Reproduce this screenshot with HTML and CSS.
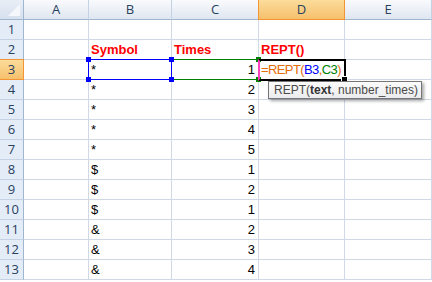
FILE: index.html
```html
<!DOCTYPE html>
<html>

<head>
    <title>REPT example</title>
    <link rel="stylesheet" href="styles.css">
</head>

<body>
    <div class="sheet">
        <div class="grid">
            <div class="hd corner"><span class="tri"></span></div>
            <div class="hd col">A</div>
            <div class="hd col">B</div>
            <div class="hd col">C</div>
            <div class="hd col active">D</div>
            <div class="hd col">E</div>

            <div class="hd row">1</div>
            <div class="c"></div><div class="c"></div><div class="c"></div><div class="c"></div><div class="c"></div>

            <div class="hd row">2</div>
            <div class="c"></div>
            <div class="c title">Symbol</div>
            <div class="c title">Times</div>
            <div class="c title">REPT<span class="paren">()</span></div>
            <div class="c"></div>

            <div class="hd row active">3</div>
            <div class="c"></div>
            <div class="c">*</div>
            <div class="c num">1</div>
            <div class="c formula"><span class="o">=REPT(</span><span class="b">B3</span><span class="o">,</span><span class="g">C3</span><span class="o">)</span></div>
            <div class="c"></div>

            <div class="hd row">4</div>
            <div class="c"></div><div class="c">*</div><div class="c num">2</div><div class="c"></div><div class="c"></div>
            <div class="hd row">5</div>
            <div class="c"></div><div class="c">*</div><div class="c num">3</div><div class="c"></div><div class="c"></div>
            <div class="hd row">6</div>
            <div class="c"></div><div class="c">*</div><div class="c num">4</div><div class="c"></div><div class="c"></div>
            <div class="hd row">7</div>
            <div class="c"></div><div class="c">*</div><div class="c num">5</div><div class="c"></div><div class="c"></div>
            <div class="hd row">8</div>
            <div class="c"></div><div class="c">$</div><div class="c num">1</div><div class="c"></div><div class="c"></div>
            <div class="hd row">9</div>
            <div class="c"></div><div class="c">$</div><div class="c num">2</div><div class="c"></div><div class="c"></div>
            <div class="hd row">10</div>
            <div class="c"></div><div class="c">$</div><div class="c num">1</div><div class="c"></div><div class="c"></div>
            <div class="hd row">11</div>
            <div class="c"></div><div class="c">&amp;</div><div class="c num">2</div><div class="c"></div><div class="c"></div>
            <div class="hd row">12</div>
            <div class="c"></div><div class="c">&amp;</div><div class="c num">3</div><div class="c"></div><div class="c"></div>
            <div class="hd row">13</div>
            <div class="c"></div><div class="c">&amp;</div><div class="c num">4</div><div class="c"></div><div class="c"></div>
        </div>

        <!-- range highlights and edit cell -->
        <div class="range blue">
            <span class="h tl"></span><span class="h bl"></span><span class="h tr"></span><span class="h br"></span>
        </div>
        <div class="range green">
            <span class="h tr"></span><span class="h br"></span>
        </div>
        <div class="edit"><span class="fill"></span></div>
        <div class="tip">REPT(<b>text</b>, number_times)</div>
    </div>
</body>

</html>
```

FILE: styles.css
```css
body {
    margin: 0;
    background: #fff;
    font-family: "Liberation Sans", Arial, sans-serif;
    font-size: 13px;
}

.sheet {
    position: relative;
    width: 432px;
    height: 282px;
    overflow: hidden;
}

.grid {
    display: grid;
    grid-template-columns: 24px 65px 83px 87px 86px 1fr;
    grid-template-rows: 20px repeat(13, 20px);
}

.c {
    border-right: 1px solid #d0d7e5;
    border-bottom: 1px solid #d0d7e5;
    padding: 0 3px 0 2px;
    line-height: 20px;
    color: #000;
    white-space: nowrap;
}

.num {
    text-align: right;
}

.title {
    color: #ff0000;
    font-weight: bold;
}

.paren {
    color: #ff0000;
}

.hd {
    color: #27415f;
    font-family: "Open Sans", sans-serif;
    font-size: 13px;
    line-height: 19px;
    text-align: center;
}

.hd.col {
    border-right: 1px solid #c5d2e3;
    border-bottom: 1px solid #9eb6ce;
    background: linear-gradient(#f9fafd, #dfe6f0);
}

.hd.row {
    border-right: 1px solid #9eb6ce;
    border-bottom: 1px solid #c5d2e3;
    background: #e4ecf7;
}

.hd.col.active {
    background: linear-gradient(#fbdc9b, #f6c06c);
    border-bottom-color: #f29536;
    border-left: 1px solid #f29536;
    border-right: 1px solid #f29536;
    margin-left: -1px;
}

.hd.row.active {
    background: linear-gradient(#fbdc9b, #f6c06c);
    border-bottom-color: #f29536;
    border-top: 1px solid #f29536;
    margin-top: -1px;
    border-right-color: #f29536;
}

.corner {
    position: relative;
    border-right: 1px solid #9eb6ce;
    border-bottom: 1px solid #9eb6ce;
    background: linear-gradient(#e9eef6, #d6e0ee);
}

.corner .tri {
    position: absolute;
    right: 3px;
    bottom: 3px;
    width: 0;
    height: 0;
    border-left: 12px solid transparent;
    border-bottom: 12px solid #f4f7fb;
}

.formula {
    padding-left: 2px;
    letter-spacing: -0.6px;
}

.o { color: #e46c0a; }
.b { color: #0000ff; }
.g { color: #008000; }

.range {
    position: absolute;
    top: 59px;
    height: 21px;
    box-sizing: border-box;
}

.range.blue {
    left: 88px;
    width: 84px;
    border: 1px solid #0000ff;
}

.range.green {
    left: 171px;
    width: 88px;
    border: 1px solid #008000;
    border-left: none;
}

.range .h {
    position: absolute;
    width: 5px;
    height: 5px;
    background: #0000ff;
}

.range.green .h {
    background: #008000;
}

.h.tl { left: -3px; top: -3px; }
.h.bl { left: -3px; bottom: -3px; }
.h.tr { right: -3px; top: -3px; }
.h.br { right: -3px; bottom: -3px; }

.range.blue .h.tr,
.range.blue .h.br {
    z-index: 2;
}

.edit {
    position: absolute;
    left: 258px;
    top: 59px;
    width: 88px;
    height: 22px;
    box-sizing: border-box;
    border: 2px solid #000;
    border-left: 2px solid #ff40c0;
}

.edit .fill {
    position: absolute;
    right: -4px;
    bottom: -4px;
    width: 5px;
    height: 5px;
    background: #000;
    border: 1px solid #fff;
}

.tip {
    position: absolute;
    left: 268px;
    top: 81px;
    width: 154px;
    height: 18px;
    box-sizing: border-box;
    background: linear-gradient(#fbfbfb, #ececee);
    border: 1px solid #767676;
    box-shadow: 2px 2px 3px rgba(0, 0, 0, 0.35);
    color: #4a4a4a;
    font-size: 12px;
    line-height: 16px;
    padding-left: 5px;
    white-space: nowrap;
}

.tip b {
    color: #333;
}
```
